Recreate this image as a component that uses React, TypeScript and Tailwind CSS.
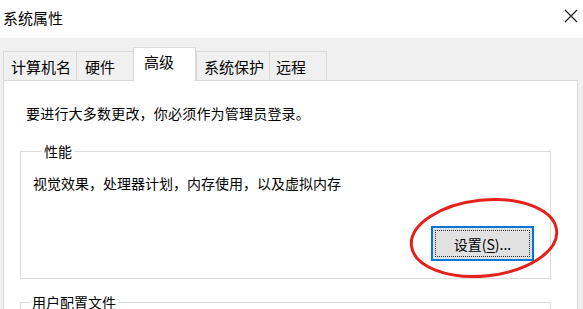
import React from 'react';

const font = { fontFamily: '"Microsoft YaHei UI", "Noto Sans CJK SC", sans-serif' };

const tabs = [
  { label: '计算机名', className: 'w-[74px] pl-[7px]' },
  { label: '硬件', className: 'w-[58px] pl-[8px]' },
  { label: '高级', className: 'w-[63px] pl-[10px]', active: true },
  { label: '系统保护', className: 'w-[74px] pl-[7px]' },
  { label: '远程', className: 'w-[58px] pl-[6px]' },
];

const CloseIcon = () => (
  <svg width="14" height="14" viewBox="0 0 14 14" className="text-[#222]">
    <path d="M1 1 L13 13 M13 1 L1 13" stroke="currentColor" strokeWidth="1.2" fill="none" />
  </svg>
);

export default function App() {
  return (
    <div className="relative w-[583px] h-[309px] overflow-hidden bg-[#f0f0f0] text-black" style={font}>
      {/* Title bar */}
      <div className="h-[38px] bg-white flex items-center justify-between pl-[3px] pr-[5px]">
        <span className="text-[15px] leading-[20px] -mt-[3px]">系统属性</span>
        <span className="-mt-[6px]">
          <CloseIcon />
        </span>
      </div>

      {/* Tabs */}
      <div className="pt-[9px] pl-[3px] flex items-end h-[42px]">
        {tabs.map((t) =>
          t.active ? (
            <div
              key={t.label}
              className={`${t.className} relative z-10 h-[34px] -mb-px bg-white border-l border-t border-r border-[#d9d9d9] text-[15px] leading-[20px] pt-[4px]`}
            >
              {t.label}
            </div>
          ) : (
            <div
              key={t.label}
              className={`${t.className} h-[29px] bg-[#f0f0f0] border-l border-t border-r border-[#dadada] -mr-px text-[15px] leading-[20px] pt-[5px]`}
            >
              {t.label}
            </div>
          )
        )}
      </div>

      {/* Panel */}
      <div className="ml-[3px] mr-[5px] h-[240px] bg-white border border-[#d9d9d9] pt-[22px] pl-[16px] pr-[26px]">
        <p className="text-[14px] leading-[20px] pl-[6px] tracking-[0.2px]">要进行大多数更改，你必须作为管理员登录。</p>

        <fieldset className="mt-[18px] border border-[#dcdcdc] pl-[12px] pr-[16px] pb-[17px]">
          <legend className="ml-[9px] px-[2px] text-[14px] leading-[20px]">性能</legend>
          <p className="mt-[12px] text-[14px] leading-[20px]">视觉效果，处理器计划，内存使用，以及虚拟内存</p>
          <div className="mt-[33px] flex justify-end">
            <button className="w-[103px] h-[35px] bg-[#e1e1e1] border-2 border-[#0078d7] p-[2px]">
              <span className="flex h-full w-full items-center justify-center border border-dotted border-[#333] text-[14px] leading-[20px]">
                设置(<span className="underline underline-offset-2">S</span>)...
              </span>
            </button>
          </div>
        </fieldset>

        <fieldset className="mt-[13px] border border-[#dcdcdc] h-[60px]">
          <legend className="ml-[9px] px-[2px] text-[14px] leading-[20px]">用户配置文件</legend>
        </fieldset>
      </div>

      {/* Red annotation ellipse */}
      <svg className="absolute left-[399px] top-[193px] pointer-events-none" width="170" height="92" viewBox="0 0 170 92">
        <ellipse
          cx="85"
          cy="45"
          rx="73"
          ry="38"
          transform="rotate(-6 85 45)"
          fill="none"
          stroke="#e5211c"
          strokeWidth="3"
        />
      </svg>
    </div>
  );
}
